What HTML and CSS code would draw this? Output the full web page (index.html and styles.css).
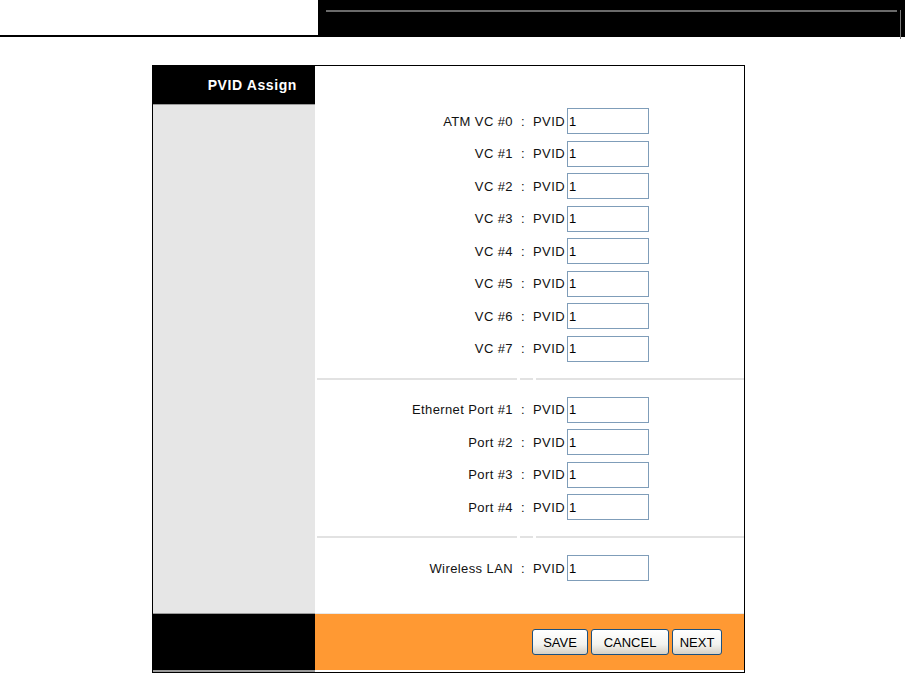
FILE: index.html
```html
<!DOCTYPE html>
<html lang="en">
<head>
    <meta charset="UTF-8">
    <title>PVID Assign</title>
    <link rel="stylesheet" href="styles.css">
</head>
<body>
    <div class="topbar">
        <div class="topbar-left"></div>
        <div class="topbar-right">
            <div class="frame"><div class="rule"></div></div>
        </div>
    </div>

    <div class="panel">
        <div class="side-title">PVID Assign</div>
        <div class="content">
            <div class="group">
                <div class="row"><span class="label">ATM VC #0&nbsp; :&nbsp; PVID</span><input class="pvid" value="1"></div>
                <div class="row"><span class="label">VC #1&nbsp; :&nbsp; PVID</span><input class="pvid" value="1"></div>
                <div class="row"><span class="label">VC #2&nbsp; :&nbsp; PVID</span><input class="pvid" value="1"></div>
                <div class="row"><span class="label">VC #3&nbsp; :&nbsp; PVID</span><input class="pvid" value="1"></div>
                <div class="row"><span class="label">VC #4&nbsp; :&nbsp; PVID</span><input class="pvid" value="1"></div>
                <div class="row"><span class="label">VC #5&nbsp; :&nbsp; PVID</span><input class="pvid" value="1"></div>
                <div class="row"><span class="label">VC #6&nbsp; :&nbsp; PVID</span><input class="pvid" value="1"></div>
                <div class="row"><span class="label">VC #7&nbsp; :&nbsp; PVID</span><input class="pvid" value="1"></div>
            </div>
            <div class="separator"><span></span><span></span><span></span></div>
            <div class="group">
                <div class="row"><span class="label">Ethernet Port #1&nbsp; :&nbsp; PVID</span><input class="pvid" value="1"></div>
                <div class="row"><span class="label">Port #2&nbsp; :&nbsp; PVID</span><input class="pvid" value="1"></div>
                <div class="row"><span class="label">Port #3&nbsp; :&nbsp; PVID</span><input class="pvid" value="1"></div>
                <div class="row"><span class="label">Port #4&nbsp; :&nbsp; PVID</span><input class="pvid" value="1"></div>
            </div>
            <div class="separator"><span></span><span></span><span></span></div>
            <div class="group">
                <div class="row"><span class="label">Wireless LAN&nbsp; :&nbsp; PVID</span><input class="pvid" value="1"></div>
            </div>
        </div>
        <div class="side"></div>
        <div class="foot-left"></div>
        <div class="foot-right">
            <button class="btn btn-save">SAVE</button>
            <button class="btn btn-cancel">CANCEL</button>
            <button class="btn btn-next">NEXT</button>
        </div>
    </div>
</body>
</html>
```

FILE: styles.css
```css
body {
    margin: 0;
    font-family: 'Liberation Sans', Arial, sans-serif;
    font-size: 13px;
    color: #111;
    background: #fff;
}
.topbar {
    display: flex;
    height: 37px;
}
.topbar-left {
    width: 318px;
    border-bottom: 2px solid #000;
    box-sizing: border-box;
}
.topbar-right {
    flex: 1;
    background: #000;
    padding: 6px 4px 2px 8px;
}
.frame {
    height: 29px;
    border-right: 1px solid #7a7a7a;
}
.rule {
    margin-top: 4px;
    margin-right: 3px;
    border-top: 2px solid #6a6a6a;
}
.panel {
    margin: 28px 0 0 152px;
    width: 591px;
    height: 606px;
    border: 1px solid #000;
    display: grid;
    grid-template-columns: 162px 429px;
    grid-template-rows: 39px 1fr 59px;
}
.side-title {
    background: #000;
    color: #fff;
    font-weight: bold;
    font-size: 14px;
    letter-spacing: 0.6px;
    text-align: right;
    padding: 11px 18px 0 0;
    border-bottom: 1px solid #9a9a9a;
}
.side {
    background: #e6e6e6;
    grid-column: 1;
    grid-row: 2;
}
.content {
    grid-column: 2;
    grid-row: 1 / 3;
    padding-top: 42px;
}
.group {
    display: flex;
    flex-direction: column;
    gap: 6.5px;
}
.row {
    display: flex;
    align-items: center;
    height: 26px;
}
.label {
    width: 250px;
    padding-right: 2px;
    text-align: right;
    white-space: nowrap;
    letter-spacing: 0.4px;
}
.pvid {
    width: 82px;
    height: 26px;
    box-sizing: border-box;
    border: 1px solid #7f9db9;
    padding: 2px 1px;
    font-family: 'Liberation Sans', Arial, sans-serif;
    font-size: 13px;
    color: #000;
    outline: none;
}
.separator {
    display: flex;
    gap: 3px;
    margin: 16px 0 17px 2px;
}
.separator span {
    height: 2px;
    background: #e2e2e2;
}
.separator span:nth-child(1) {
    width: 200px;
}
.separator span:nth-child(2) {
    width: 13px;
}
.separator span:nth-child(3) {
    flex: 1;
}
.foot-left {
    background: #000;
    border-top: 1px solid #9a9a9a;
    border-bottom: 2px solid #9a9a9a;
}
.foot-right {
    background: #ff9933;
    border-top: 1px solid #e8e8e8;
    border-bottom: 2px solid #fff;
    display: flex;
    justify-content: flex-end;
    align-items: center;
    gap: 3px;
    padding-right: 22px;
}
.btn {
    height: 26px;
    padding: 0;
    font-family: 'Liberation Sans', Arial, sans-serif;
    font-size: 13px;
    color: #000;
    border: 1px solid #1c5180;
    border-radius: 3px;
    background: linear-gradient(#ffffff, #f3f3ef 60%, #d6d0c5);
    cursor: pointer;
}
.btn-save {
    width: 56px;
}
.btn-cancel {
    width: 78px;
}
.btn-next {
    width: 50px;
}
```
